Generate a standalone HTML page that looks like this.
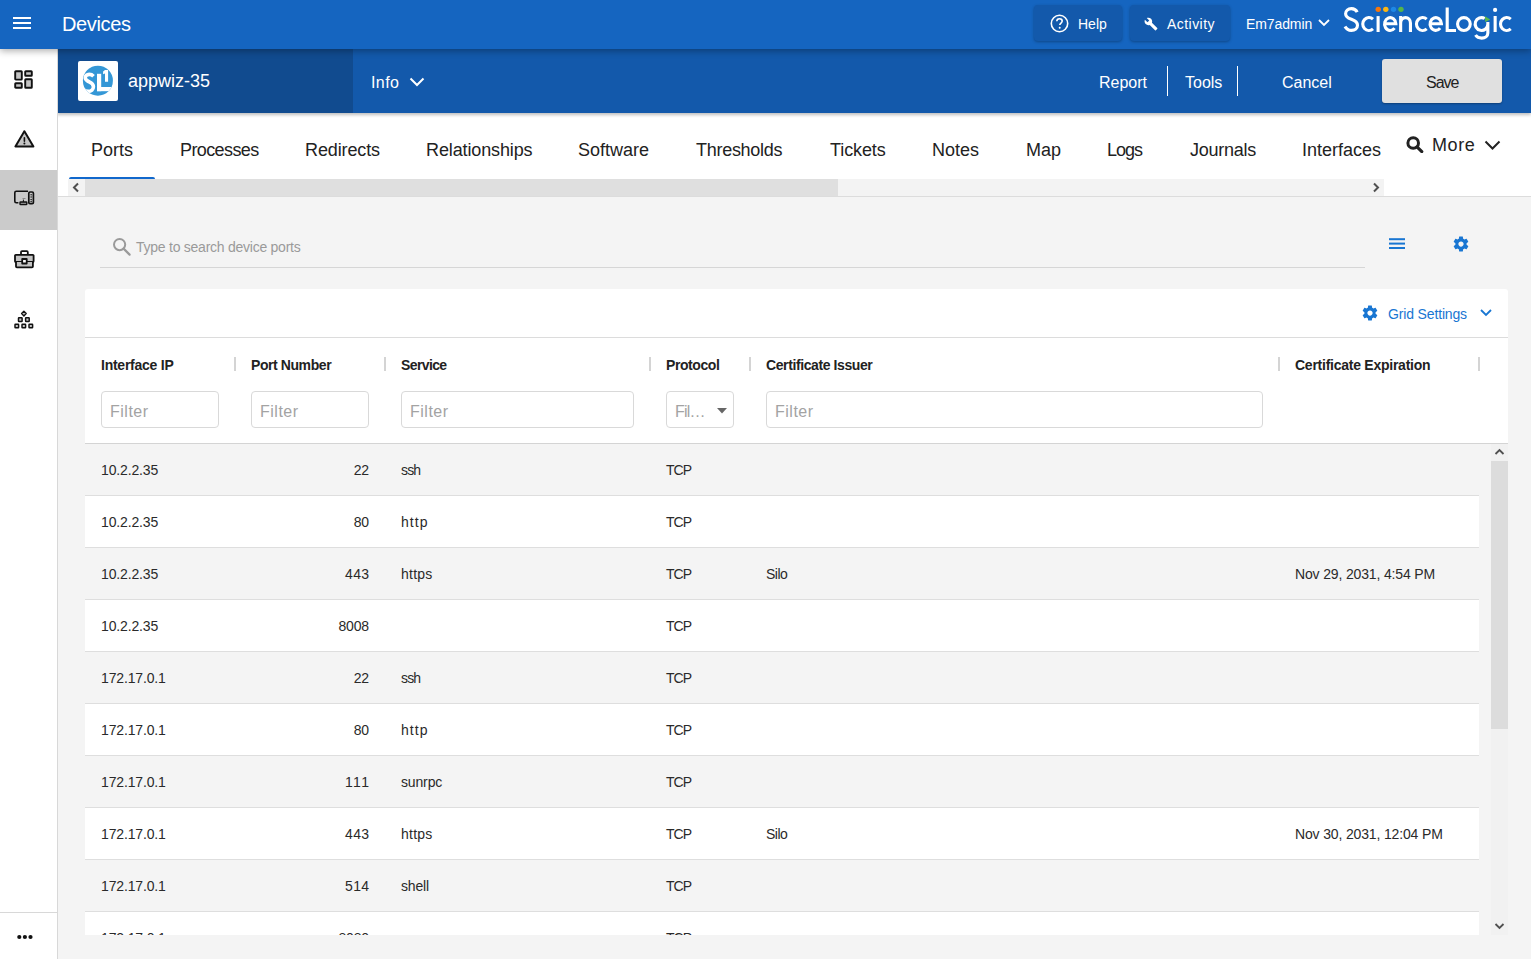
<!DOCTYPE html>
<html><head><meta charset="utf-8">
<style>
*{box-sizing:border-box;margin:0;padding:0}
html,body{width:1531px;height:959px;overflow:hidden;background:#f4f4f4;font-family:"Liberation Sans",sans-serif;color:#222}
.a{position:absolute;white-space:nowrap}
#topbar{position:absolute;left:0;top:0;width:1531px;height:49px;background:#1565c0;box-shadow:0 2px 7px rgba(0,0,0,.32);z-index:5}
#hdr{position:absolute;left:57px;top:49px;width:1474px;height:64px;background:#1359ab;box-shadow:0 2px 3px rgba(0,0,0,.25);z-index:3}
#hdrdark{position:absolute;left:0;top:0;width:296px;height:64px;background:#114b8f}
#side{position:absolute;left:0;top:49px;width:58px;height:910px;background:#fff;border-right:1px solid #d8d8d8;z-index:4}
#tabs{position:absolute;left:57px;top:113px;width:1474px;height:84px;background:#fff;border-bottom:1px solid #dcdcdc}
.tab{position:absolute;top:139px;font-size:18px;color:#222;line-height:22px}
.w{color:#fff}
.btn{position:absolute;top:5px;height:36px;background:#1359ab;border-radius:4px;box-shadow:0 1px 3px rgba(0,0,0,.3)}
#card{position:absolute;left:85px;top:289px;width:1423px;height:646px;background:#fff;border-radius:3px;overflow:hidden}
.hl{position:absolute;top:357px;font-size:14px;font-weight:bold;color:#222;line-height:17px;letter-spacing:-0.25px}
.sep{position:absolute;top:357px;width:2px;height:14px;background:#d4d4d4}
.flt{position:absolute;top:391px;height:37px;border:1px solid #d9d9d9;border-radius:4px;background:#fff;font-size:16px;color:#a3a3a3;padding:0 0 0 8px;line-height:40px;letter-spacing:0.5px}
.row{position:absolute;left:0;width:1394px;height:52px;border-bottom:1px solid #dedede;background:#fff}
.row.g{background:#f4f4f4}
.c{position:absolute;top:17px;font-size:14px;color:#2a2a2a;line-height:18px;letter-spacing:-0.15px}
</style></head><body>

<!-- TOP BAR -->
<div id="topbar">
  <svg class="a" style="left:13px;top:16px" width="18" height="15" viewBox="0 0 18 15"><rect x="0" y="1" width="18" height="2" fill="#fff"/><rect x="0" y="6" width="18" height="2" fill="#fff"/><rect x="0" y="11" width="18" height="2" fill="#fff"/></svg>
  <div class="a w" style="left:62px;top:12px;font-size:20px;line-height:24px;letter-spacing:-0.35px">Devices</div>
  <div class="btn" style="left:1034px;width:88px"></div>
  <svg class="a" style="left:1050px;top:14px" width="19" height="19" viewBox="0 0 19 19"><circle cx="9.5" cy="9.5" r="8.2" fill="none" stroke="#fff" stroke-width="1.6"/><path d="M6.8 7.3c0-1.6 1.2-2.6 2.7-2.6s2.7 1 2.7 2.4c0 1.9-2.4 2-2.4 3.8" fill="none" stroke="#fff" stroke-width="1.6"/><circle cx="9.7" cy="13.8" r="1" fill="#fff"/></svg>
  <div class="a w" style="left:1078px;top:16px;font-size:14px;line-height:17px">Help</div>
  <div class="btn" style="left:1130px;width:100px"></div>
  <svg class="a" style="left:1144px;top:17px" width="14" height="14" viewBox="0 0 24 24"><path fill="#fff" d="M22.7 19l-9.1-9.1c.9-2.3.4-5-1.5-6.9-2-2-5-2.4-7.4-1.3L9 6 6 9 1.6 4.7C.4 7.1.9 10.1 2.9 12.1c1.9 1.9 4.6 2.4 6.9 1.5l9.1 9.1c.4.4 1 .4 1.4 0l2.3-2.3c.5-.4.5-1.1.1-1.4z"/></svg>
  <div class="a w" style="left:1167px;top:16px;font-size:14px;line-height:17px;letter-spacing:0.45px">Activity</div>
  <div class="a w" style="left:1246px;top:16px;font-size:14px;line-height:17px;letter-spacing:-0.1px">Em7admin</div>
  <svg class="a" style="left:1318px;top:18px" width="12" height="10" viewBox="0 0 12 10"><path d="M1 2l5 5 5-5" fill="none" stroke="#fff" stroke-width="1.8"/></svg>
  <!-- logo -->
  <svg class="a" style="left:1340px;top:0" width="180" height="45" viewBox="0 0 180 45" fill="none" stroke="#fff" stroke-width="3.1">
    <path d="M17.2 12.2C16.2 10 14.3 8.6 11.4 8.6C8 8.6 5.6 10.8 5.6 13.7C5.6 17 8.4 18.2 11.4 19.3C14.8 20.5 17.5 21.9 17.5 25.3C17.5 28.5 15 30.4 11.4 30.4C8.4 30.4 6.2 28.7 5 26.5"/>
    <path d="M33 19.2A6.2 6.4 0 1 0 33 28.9"/>
    <path d="M38.1 16.1V32"/>
    <path d="M44.55 23.8H55.85A5.65 6.4 0 1 0 54.53 28.16"/>
    <path d="M60.65 32V16.1M60.65 23C60.65 19.5 62.8 17.65 65.55 17.65C68.3 17.65 70.45 19.5 70.45 23V32"/>
    <path d="M86.7 19.2A6.2 6.4 0 1 0 86.7 28.9"/>
    <path d="M89.05 23.8H101.45A5.7 6.4 0 1 0 100.1 28.16"/>
    <path d="M107.2 7.6V30.45H116" stroke-linejoin="miter"/>
    <ellipse cx="123.9" cy="24.05" rx="6.35" ry="6.4"/>
    <path d="M147.85 24.05A6.35 6.4 0 1 1 144.7 18.5M147.85 22V33C147.85 36.5 145 38.15 141.7 38.15C139 38.15 136.8 37 135.5 35"/>
    <path d="M155.15 16V32"/>
    <path d="M170.75 19.2A6.2 6.4 0 1 0 170.75 28.9"/>
    <circle cx="155.1" cy="9.9" r="2.1" fill="#fff" stroke="none"/>
    <path d="M145 16.2L150.2 19.6L145.2 22z" fill="#5ab84a" stroke="none"/>
    <circle cx="38.2" cy="9.35" r="2.7" fill="#f7760b" stroke="none"/>
    <circle cx="45.8" cy="9.35" r="2.7" fill="#fbb614" stroke="none"/>
    <circle cx="53.5" cy="9.35" r="2.7" fill="#1e88e5" stroke="none"/>
    <circle cx="61" cy="9.35" r="2.7" fill="#55b548" stroke="none"/>
  </svg>
</div>

<!-- DEVICE HEADER -->
<div id="hdr">
  <div id="hdrdark"></div>
  <div class="a" style="left:21px;top:12px;width:40px;height:40px;background:#fff;border-radius:2px"></div>
  <svg class="a" style="left:21px;top:12px" width="40" height="40" viewBox="0 0 40 40">
    <defs><clipPath id="cc"><circle cx="19.9" cy="19.7" r="15"/></clipPath></defs>
    <circle cx="19.9" cy="19.7" r="15" fill="#3497d6"/>
    <g clip-path="url(#cc)" fill="#fff">
      <path d="M15.5 15.2C14.3 13.9 12.8 13.4 11.2 13.4C8.6 13.4 7.2 15 7.2 16.8C7.2 19.1 9.4 20 11.3 20.9C13.6 22 15.4 23.2 15.4 25.8C15.4 28.6 13.2 30.4 10.3 30.4C8.3 30.4 6.5 29.6 5 28.2" fill="none" stroke="#fff" stroke-width="3.6"/>
      <rect x="19" y="12.8" width="4.2" height="17.4"/>
      <rect x="19" y="26" width="18" height="4.2"/>
      <path d="M27 8.9h3.1v11.9H27V12.6l-1.9.6V10.5z"/>
    </g>
  </svg>
  <div class="a w" style="left:71px;top:21px;font-size:18px;line-height:22px">appwiz-35</div>
  <div class="a w" style="left:314px;top:24px;font-size:16px;line-height:19px;letter-spacing:0.4px">Info</div>
  <svg class="a" style="left:352px;top:28px" width="16" height="10" viewBox="0 0 16 10"><path d="M1.5 1.5l6.5 6.5 6.5-6.5" fill="none" stroke="#fff" stroke-width="2"/></svg>
  <div class="a w" style="left:1042px;top:24px;font-size:16px;line-height:19px">Report</div>
  <div class="a" style="left:1110px;top:17px;width:1px;height:30px;background:#fff"></div>
  <div class="a w" style="left:1128px;top:24px;font-size:16px;line-height:19px">Tools</div>
  <div class="a" style="left:1180px;top:17px;width:1px;height:30px;background:#fff"></div>
  <div class="a w" style="left:1225px;top:24px;font-size:16px;line-height:19px">Cancel</div>
  <div class="a" style="left:1325px;top:10px;width:120px;height:44px;background:#e0e0e0;border-radius:3px;box-shadow:0 1px 2px rgba(0,0,0,.3)"></div>
  <div class="a" style="left:1369px;top:24px;font-size:16px;line-height:19px;color:#222;letter-spacing:-1px">Save</div>
</div>

<!-- SIDEBAR -->
<div id="side">
  <svg class="a" style="left:13px;top:20px" width="20" height="20" viewBox="0 0 20 20" fill="#c4c4c4" stroke="#111" stroke-width="1.9" stroke-linejoin="round">
    <rect x="2.2" y="2.2" width="6.6" height="8.4" rx=".6"/><rect x="12.2" y="2.2" width="6.6" height="4.6" rx=".6"/><rect x="2.2" y="14.2" width="6.6" height="4.6" rx=".6"/><rect x="12.2" y="10.2" width="6.6" height="8.6" rx=".6"/>
  </svg>
  <svg class="a" style="left:13px;top:79.5px" width="22" height="20" viewBox="0 0 22 20">
    <path d="M11.4 2.2L2.4 17.5h18z" fill="#c4c4c4" stroke="#111" stroke-width="2" stroke-linejoin="round"/>
    <rect x="10.6" y="8" width="1.6" height="5" rx=".8" fill="#111"/><circle cx="11.4" cy="14.5" r="1" fill="#111"/>
  </svg>
  <div class="a" style="left:0;top:121px;width:57px;height:60px;background:#cbcbcb"></div>
  <svg class="a" style="left:13px;top:140px" width="22" height="18" viewBox="0 0 22 18" fill="none" stroke="#111" stroke-width="1.6">
    <path d="M15 2.2H3.3c-1 0-1.5.5-1.5 1.5v8.6c0 1 .5 1.4 1.5 1.4h2.1"/>
    <rect x="15.8" y="3" width="4.6" height="11.6" rx="1.2" stroke-width="1.7"/>
    <circle cx="18.1" cy="5.8" r=".75" fill="#111" stroke="none"/><circle cx="18.1" cy="7.9" r=".75" fill="#111" stroke="none"/><circle cx="18.1" cy="10.6" r=".75" fill="#111" stroke="none"/><circle cx="18.1" cy="12.4" r=".75" fill="#111" stroke="none"/>
    <rect x="7" y="13" width="6.8" height="2.6" rx=".6" fill="#888" stroke-width="1.4"/>
    <path d="M10.4 10.6v2.4" stroke-width="1"/>
    <path d="M9.5 9.5h3" stroke="#777" stroke-width=".8"/>
  </svg>
  <svg class="a" style="left:13px;top:200px" width="22" height="20" viewBox="0 0 22 20" stroke="#111" stroke-width="1.8" stroke-linejoin="round">
    <path d="M8 5.5V3.2c0-.7.3-1 1-1h4.8c.7 0 1 .3 1 1v2.3" fill="none"/>
    <rect x="2" y="5.8" width="18.6" height="7.2" rx=".8" fill="#c4c4c4"/>
    <path d="M3 13v4.4c0 .6.3.9.9.9H19c.6 0 .9-.3.9-.9V13" fill="#c4c4c4"/>
    <rect x="9.2" y="10" width="4.5" height="4.5" fill="#fff" stroke-width="1.8"/>
  </svg>
  <svg class="a" style="left:13px;top:260px" width="22" height="22" viewBox="0 0 22 22" fill="#c4c4c4" stroke="#111" stroke-width="1.5" stroke-linejoin="round">
    <path d="M10.9 2.3l2.3 2.3-2.3 2.3-2.3-2.3z" stroke-width="1.4"/>
    <rect x="5.5" y="8.8" width="3.6" height="3.8" rx=".5"/><rect x="12.6" y="8.8" width="3.6" height="3.8" rx=".5"/>
    <rect x="2" y="15.2" width="3.6" height="3.6" rx=".5"/><rect x="9" y="15.2" width="3.6" height="3.6" rx=".5"/><rect x="16" y="15.2" width="3.6" height="3.6" rx=".5"/>
  </svg>
  <div class="a" style="left:0;top:863px;width:57px;height:1px;background:#d8d8d8"></div>
  <svg class="a" style="left:17px;top:885px" width="16" height="6" viewBox="0 0 16 6"><circle cx="2.3" cy="3" r="2.1" fill="#111"/><circle cx="7.9" cy="3" r="2.1" fill="#111"/><circle cx="13.5" cy="3" r="2.1" fill="#111"/></svg>
</div>

<!-- TABS -->
<div id="tabs"></div>
<div class="tab a" style="left:91px">Ports</div>
<div class="tab a" style="left:180px;letter-spacing:-0.6px">Processes</div>
<div class="tab a" style="left:305px;letter-spacing:-0.12px">Redirects</div>
<div class="tab a" style="left:426px;letter-spacing:-0.12px">Relationships</div>
<div class="tab a" style="left:578px">Software</div>
<div class="tab a" style="left:696px;letter-spacing:-0.28px">Thresholds</div>
<div class="tab a" style="left:830px;letter-spacing:-0.1px">Tickets</div>
<div class="tab a" style="left:932px">Notes</div>
<div class="tab a" style="left:1026px">Map</div>
<div class="tab a" style="left:1107px;letter-spacing:-1px">Logs</div>
<div class="tab a" style="left:1190px;letter-spacing:-0.25px">Journals</div>
<div class="tab a" style="left:1302px">Interfaces</div>

<div class="a" style="left:69px;top:177px;width:86px;height:2px;background:#1168cc;border-radius:2px 2px 0 0"></div>
<div class="a" style="left:68px;top:179px;width:1316px;height:17px;background:#f3f3f3"></div>
<div class="a" style="left:85px;top:179px;width:753px;height:17px;background:#dfdfdf"></div>
<svg class="a" style="left:71px;top:182px" width="10" height="11" viewBox="0 0 10 11"><path d="M7 1.5L3 5.5l4 4" fill="none" stroke="#505050" stroke-width="2"/></svg>
<svg class="a" style="left:1371px;top:182px" width="10" height="11" viewBox="0 0 10 11"><path d="M3 1.5l4 4-4 4" fill="none" stroke="#505050" stroke-width="2"/></svg>
<svg class="a" style="left:1406px;top:136px" width="18" height="17" viewBox="0 0 18 17"><circle cx="7.2" cy="7" r="5.3" fill="none" stroke="#222" stroke-width="3"/><path d="M11 10.8l4.8 4.8" stroke="#222" stroke-width="3.1" stroke-linecap="round"/></svg>
<div class="a" style="left:1432px;top:134px;font-size:18px;line-height:22px;color:#222;letter-spacing:0.6px">More</div>
<svg class="a" style="left:1484px;top:139px" width="17" height="12" viewBox="0 0 17 12"><path d="M1.5 2.5l7 7 7-7" fill="none" stroke="#222" stroke-width="2"/></svg>

<!-- CONTENT -->
<svg class="a" style="left:112px;top:237px" width="20" height="19" viewBox="0 0 20 19"><circle cx="7.6" cy="7.6" r="5.6" fill="none" stroke="#9a9a9a" stroke-width="2"/><path d="M11.6 11.6l6 6" stroke="#9a9a9a" stroke-width="2.2" stroke-linecap="round"/></svg>
<div class="a" style="left:136px;top:239px;font-size:14px;line-height:17px;color:#9a9a9a;letter-spacing:-0.25px">Type to search device ports</div>
<div class="a" style="left:100px;top:267px;width:1265px;height:1px;background:#d6d6d6"></div>
<svg class="a" style="left:1389px;top:238px" width="16" height="12" viewBox="0 0 16 12"><rect x="0" y="0.2" width="16" height="2" fill="#1976d2"/><rect x="0" y="4.6" width="16" height="2" fill="#1976d2"/><rect x="0" y="9" width="16" height="2" fill="#1976d2"/></svg>
<svg class="a" style="left:1452px;top:235px" width="18" height="18" viewBox="0 0 24 24"><path fill="#1976d2" d="M19.4 13c.04-.3.06-.6.06-1s-.02-.7-.06-1l2.1-1.7c.2-.15.24-.42.12-.64l-2-3.46c-.12-.22-.39-.3-.61-.22l-2.5 1c-.52-.4-1.08-.73-1.69-.98l-.38-2.65C14.46 2.18 14.25 2 14 2h-4c-.25 0-.46.18-.49.42l-.38 2.65c-.61.25-1.17.59-1.69.98l-2.5-1c-.23-.09-.49 0-.61.22l-2 3.46c-.13.22-.07.49.12.64L4.57 11c-.04.32-.07.65-.07.98s.03.66.07.98l-2.11 1.65c-.19.15-.24.42-.12.64l2 3.46c.12.22.39.3.61.22l2.49-1c.52.4 1.08.73 1.69.98l.38 2.65c.03.24.24.42.49.42h4c.25 0 .46-.18.49-.42l.38-2.65c.61-.25 1.17-.59 1.69-.98l2.49 1c.23.09.49 0 .61-.22l2-3.46c.12-.22.07-.49-.12-.64L19.4 13zM12 15.5c-1.93 0-3.5-1.57-3.5-3.5s1.57-3.5 3.5-3.5 3.5 1.57 3.5 3.5-1.57 3.5-3.5 3.5z"/></svg>

<div id="card">
</div>
<svg class="a" style="left:1361px;top:304px" width="18" height="18" viewBox="0 0 24 24"><path fill="#1976d2" d="M19.4 13c.04-.3.06-.6.06-1s-.02-.7-.06-1l2.1-1.7c.2-.15.24-.42.12-.64l-2-3.46c-.12-.22-.39-.3-.61-.22l-2.5 1c-.52-.4-1.080-.73-1.69-.98l-.38-2.65C14.46 2.18 14.25 2 14 2h-4c-.25 0-.46.18-.49.42l-.38 2.65c-.61.25-1.17.59-1.690.98l-2.5-1c-.23-.09-.49 0-.61.22l-2 3.46c-.13.22-.07.49.12.64L4.57 11c-.04.32-.07.65-.07.98s.03.66.07.98l-2.11 1.65c-.19.15-.24.42-.12.64l2 3.46c.12.22.39.3.61.22l2.49-1c.52.4 1.08.73 1.69.98l.38 2.650c.03.24.24.42.49.42h4c.25 0 .46-.18.49-.42l.38-2.65c.61-.25 1.17-.59 1.69-.98l2.49 1c.23.09.49 0 .61-.22l2-3.46c.12-.22.07-.49-.12-.64L19.4 13zM12 15.5c-1.93 0-3.5-1.57-3.5-3.5s1.57-3.5 3.5-3.5 3.5 1.57 3.5 3.5-1.57 3.5-3.5 3.5z"/></svg>
<div class="a" style="left:1388px;top:306px;font-size:14px;line-height:17px;color:#1976d2;letter-spacing:-0.15px">Grid Settings</div>
<svg class="a" style="left:1480px;top:308px" width="12" height="10" viewBox="0 0 12 10"><path d="M1 2l5 5 5-5" fill="none" stroke="#1976d2" stroke-width="1.8"/></svg>
<div class="a" style="left:85px;top:337px;width:1423px;height:1px;background:#dcdcdc"></div>

<div class="hl a" style="left:101px">Interface IP</div>
<div class="hl a" style="left:251px;letter-spacing:-0.42px">Port Number</div>
<div class="hl a" style="left:401px;letter-spacing:-0.62px">Service</div>
<div class="hl a" style="left:666px;letter-spacing:-0.42px">Protocol</div>
<div class="hl a" style="left:766px;letter-spacing:-0.4px">Certificate Issuer</div>
<div class="hl a" style="left:1295px">Certificate Expiration</div>
<div class="sep" style="left:234px"></div>
<div class="sep" style="left:384px"></div>
<div class="sep" style="left:649px"></div>
<div class="sep" style="left:749px"></div>
<div class="sep" style="left:1278px"></div>
<div class="sep" style="left:1478px"></div>

<div class="flt" style="left:101px;width:118px">Filter</div>
<div class="flt" style="left:251px;width:118px">Filter</div>
<div class="flt" style="left:401px;width:233px">Filter</div>
<div class="flt" style="left:666px;width:68px;letter-spacing:-0.8px">Fil&hellip;</div>
<svg class="a" style="left:717px;top:408px" width="10" height="6" viewBox="0 0 10 6"><path d="M0 0h10L5 5.5z" fill="#666"/></svg>
<div class="flt" style="left:766px;width:497px">Filter</div>
<div class="a" style="left:85px;top:443px;width:1423px;height:1px;background:#d4d4d4"></div>

<div class="a" style="left:85px;top:444px;width:1423px;height:491px;overflow:hidden;background:#f4f4f4">
<div class="row g" style="top:0px"><div class="c" style="left:16px">10.2.2.35</div><div class="c" style="right:1110.00px">22</div><div class="c" style="left:316px;letter-spacing:-0.85px">ssh</div><div class="c" style="left:581px;letter-spacing:-1px">TCP</div><div class="c" style="left:681px"></div><div class="c" style="left:1210px"></div></div>
<div class="row" style="top:52px"><div class="c" style="left:16px">10.2.2.35</div><div class="c" style="right:1110.00px">80</div><div class="c" style="left:316px;letter-spacing:1.08px">http</div><div class="c" style="left:581px;letter-spacing:-1px">TCP</div><div class="c" style="left:681px"></div><div class="c" style="left:1210px"></div></div>
<div class="row g" style="top:104px"><div class="c" style="left:16px">10.2.2.35</div><div class="c" style="right:1109.50px;letter-spacing:0.35px">443</div><div class="c" style="left:316px;letter-spacing:0.25px">https</div><div class="c" style="left:581px;letter-spacing:-1px">TCP</div><div class="c" style="left:681px;letter-spacing:-0.48px">Silo</div><div class="c" style="left:1210px">Nov 29, 2031, 4:54 PM</div></div>
<div class="row" style="top:156px"><div class="c" style="left:16px">10.2.2.35</div><div class="c" style="right:1110.00px">8008</div><div class="c" style="left:316px"></div><div class="c" style="left:581px;letter-spacing:-1px">TCP</div><div class="c" style="left:681px"></div><div class="c" style="left:1210px"></div></div>
<div class="row g" style="top:208px"><div class="c" style="left:16px">172.17.0.1</div><div class="c" style="right:1110.00px">22</div><div class="c" style="left:316px;letter-spacing:-0.85px">ssh</div><div class="c" style="left:581px;letter-spacing:-1px">TCP</div><div class="c" style="left:681px"></div><div class="c" style="left:1210px"></div></div>
<div class="row" style="top:260px"><div class="c" style="left:16px">172.17.0.1</div><div class="c" style="right:1110.00px">80</div><div class="c" style="left:316px;letter-spacing:1.08px">http</div><div class="c" style="left:581px;letter-spacing:-1px">TCP</div><div class="c" style="left:681px"></div><div class="c" style="left:1210px"></div></div>
<div class="row g" style="top:312px"><div class="c" style="left:16px">172.17.0.1</div><div class="c" style="right:1108.35px;letter-spacing:1.5px">111</div><div class="c" style="left:316px">sunrpc</div><div class="c" style="left:581px;letter-spacing:-1px">TCP</div><div class="c" style="left:681px"></div><div class="c" style="left:1210px"></div></div>
<div class="row" style="top:364px"><div class="c" style="left:16px">172.17.0.1</div><div class="c" style="right:1109.50px;letter-spacing:0.35px">443</div><div class="c" style="left:316px;letter-spacing:0.25px">https</div><div class="c" style="left:581px;letter-spacing:-1px">TCP</div><div class="c" style="left:681px;letter-spacing:-0.48px">Silo</div><div class="c" style="left:1210px">Nov 30, 2031, 12:04 PM</div></div>
<div class="row g" style="top:416px"><div class="c" style="left:16px">172.17.0.1</div><div class="c" style="right:1109.50px;letter-spacing:0.35px">514</div><div class="c" style="left:316px">shell</div><div class="c" style="left:581px;letter-spacing:-1px">TCP</div><div class="c" style="left:681px"></div><div class="c" style="left:1210px"></div></div>
<div class="row" style="top:468px"><div class="c" style="left:16px">172.17.0.1</div><div class="c" style="right:1110.00px">8080</div><div class="c" style="left:316px"></div><div class="c" style="left:581px;letter-spacing:-1px">TCP</div><div class="c" style="left:681px"></div><div class="c" style="left:1210px"></div></div>
<div class="a" style="left:1406px;top:0;width:17px;height:491px;background:#f1f1f1"></div>
<div class="a" style="left:1406px;top:17px;width:17px;height:268px;background:#dcdcdc"></div>
<svg class="a" style="left:1409px;top:3px" width="11" height="10" viewBox="0 0 11 10"><path d="M1.5 7l4-4 4 4" fill="none" stroke="#505050" stroke-width="1.8"/></svg>
<svg class="a" style="left:1409px;top:477px" width="11" height="10" viewBox="0 0 11 10"><path d="M1.5 3l4 4 4-4" fill="none" stroke="#505050" stroke-width="1.8"/></svg>
</div>


</body></html>
